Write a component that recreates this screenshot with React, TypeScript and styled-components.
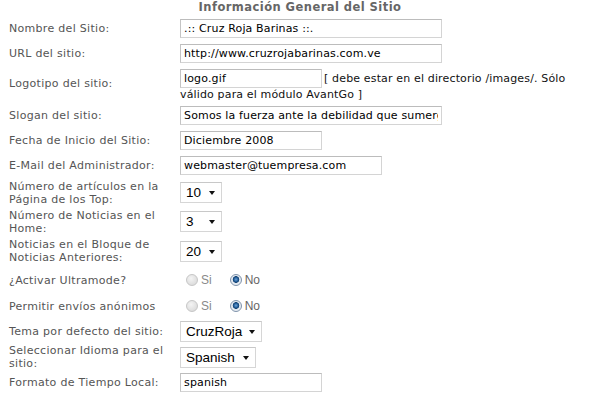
import React from 'react';
import styled, { createGlobalStyle } from 'styled-components';

const GlobalStyle = createGlobalStyle`
  html, body {
    margin: 0;
    padding: 0;
    background: #ffffff;
  }
  body {
    font-family: Verdana, "DejaVu Sans", sans-serif;
    font-size: 11px;
  }
`;

const Page = styled.div`
  width: 600px;
  height: 395px;
  overflow: hidden;
  padding: 0 9px;
  box-sizing: border-box;
`;

const Title = styled.div`
  height: 16px;
  line-height: 14px;
  text-align: center;
  font-weight: bold;
  color: #666666;
  font-size: 11.5px;
  letter-spacing: 0.45px;
`;

const Row = styled.div<{ $h: number }>`
  display: grid;
  grid-template-columns: 171px 1fr;
  align-items: center;
  height: ${(p) => p.$h}px;
`;

const Label = styled.div`
  color: #555555;
  line-height: 13px;
  letter-spacing: 0.3px;
`;

const Field = styled.div`
  display: flex;
  align-items: center;
`;

const TextInput = styled.input<{ $w: number }>`
  width: ${(p) => p.$w}px;
  height: 19px;
  box-sizing: border-box;
  margin: 0;
  padding: 0 3px;
  border: 1px solid #d4d4d4;
  border-top-color: #bcbcbc;
  border-left-color: #c4c4c4;
  background: #ffffff;
  font-family: Verdana, "DejaVu Sans", sans-serif;
  font-size: 11px;
  letter-spacing: 0.15px;
  color: #000000;
  outline: none;
`;

const LogoField = styled.div`
  line-height: 13px;
  color: #111111;
  padding-top: 3px;
`;

const Hint = styled.span<{ $first?: boolean }>`
  font-size: 11px;
  letter-spacing: 0.15px;
  margin-left: ${(p) => (p.$first ? '2px' : '0')};
`;

const SelectWrap = styled.span<{ $w: number }>`
  position: relative;
  display: inline-block;
  width: ${(p) => p.$w}px;
  height: 21px;

  &::after {
    content: '';
    position: absolute;
    right: 7px;
    top: 9px;
    border-left: 3.5px solid transparent;
    border-right: 3.5px solid transparent;
    border-top: 4px solid #111111;
    pointer-events: none;
  }
`;

const Select = styled.select`
  appearance: none;
  -webkit-appearance: none;
  width: 100%;
  height: 100%;
  box-sizing: border-box;
  margin: 0;
  padding: 0 0 0 5px;
  border: 1px solid #d6d6d6;
  border-top-color: #c8c8c8;
  background: #ffffff;
  font-family: Arial, "Liberation Sans", sans-serif;
  font-size: 13.5px;
  color: #000000;
  outline: none;
`;

const RadioGroup = styled.div`
  display: flex;
  align-items: center;
  padding-left: 6px;
  font-family: Arial, "Liberation Sans", sans-serif;
  font-size: 12px;
`;

const RadioOption = styled.span<{ $checked?: boolean }>`
  display: inline-flex;
  align-items: center;
  gap: 3px;
  margin-right: 18px;
  color: ${(p) => (p.$checked ? '#666666' : '#8a8a8a')};
`;

const RadioDot = styled.span<{ $checked?: boolean }>`
  width: 12px;
  height: 12px;
  box-sizing: border-box;
  border-radius: 50%;
  border: 1px solid ${(p) => (p.$checked ? '#7f93ab' : '#c6c6c6')};
  background: ${(p) =>
    p.$checked
      ? 'radial-gradient(circle at 50% 45%, #6fa3d6 0, #1f5a96 2.2px, #0e3d6e 3px, #dfe6ee 3.6px, #f6f8fa 100%)'
      : 'radial-gradient(circle at 40% 35%, #f4f4f4 0, #dedede 70%, #d2d2d2 100%)'};
`;

type Opt = { value: string };

const Dropdown: React.FC<{ w: number; value: string; options: Opt[] }> = ({ w, value, options }) => (
  <SelectWrap $w={w}>
    <Select defaultValue={value}>
      {options.map((o) => (
        <option key={o.value} value={o.value}>
          {o.value}
        </option>
      ))}
    </Select>
  </SelectWrap>
);

const YesNo: React.FC = () => (
  <RadioGroup>
    <RadioOption>
      <RadioDot />
      Si
    </RadioOption>
    <RadioOption $checked>
      <RadioDot $checked />
      No
    </RadioOption>
  </RadioGroup>
);

const nums = (list: string[]) => list.map((v) => ({ value: v }));

export default function App() {
  return (
    <>
      <GlobalStyle />
      <Page>
        <Title>Información General del Sitio</Title>

        <Row $h={25}>
          <Label>Nombre del Sitio:</Label>
          <Field>
            <TextInput $w={262} defaultValue=".:: Cruz Roja Barinas ::." />
          </Field>
        </Row>

        <Row $h={24}>
          <Label>URL del sitio:</Label>
          <Field>
            <TextInput $w={262} defaultValue="http://www.cruzrojabarinas.com.ve" />
          </Field>
        </Row>

        <Row $h={37}>
          <Label>Logotipo del sitio:</Label>
          <LogoField>
            <TextInput $w={142} defaultValue="logo.gif" />
            <Hint $first>[ debe estar en el directorio /images/. Sólo</Hint>
            <br />
            <Hint>válido para el módulo AvantGo ]</Hint>
          </LogoField>
        </Row>

        <Row $h={26}>
          <Label>Slogan del sitio:</Label>
          <Field>
            <TextInput $w={262} defaultValue="Somos la fuerza ante la debilidad que sumerge al ser humano" />
          </Field>
        </Row>

        <Row $h={25}>
          <Label>Fecha de Inicio del Sitio:</Label>
          <Field>
            <TextInput $w={142} defaultValue="Diciembre 2008" />
          </Field>
        </Row>

        <Row $h={25}>
          <Label>E-Mail del Administrador:</Label>
          <Field>
            <TextInput $w={202} defaultValue="webmaster@tuempresa.com" />
          </Field>
        </Row>

        <Row $h={29}>
          <Label>
            Número de artículos en la
            <br />
            Página de los Top:
          </Label>
          <Field>
            <Dropdown w={42} value="10" options={nums(['10', '15', '20', '25', '30'])} />
          </Field>
        </Row>

        <Row $h={29}>
          <Label>
            Número de Noticias en el
            <br />
            Home:
          </Label>
          <Field>
            <Dropdown w={42} value="3" options={nums(['1', '2', '3', '4', '5'])} />
          </Field>
        </Row>

        <Row $h={30}>
          <Label>
            Noticias en el Bloque de
            <br />
            Noticias Anteriores:
          </Label>
          <Field>
            <Dropdown w={42} value="20" options={nums(['10', '20', '30', '40'])} />
          </Field>
        </Row>

        <Row $h={28}>
          <Label>¿Activar Ultramode?</Label>
          <YesNo />
        </Row>

        <Row $h={24}>
          <Label>Permitir envíos anónimos</Label>
          <YesNo />
        </Row>

        <Row $h={26}>
          <Label>Tema por defecto del sitio:</Label>
          <Field>
            <Dropdown w={82} value="CruzRoja" options={nums(['CruzRoja', 'Default'])} />
          </Field>
        </Row>

        <Row $h={26}>
          <Label>
            Seleccionar Idioma para el
            <br />
            sitio:
          </Label>
          <Field>
            <Dropdown w={76} value="Spanish" options={nums(['Spanish', 'English'])} />
          </Field>
        </Row>

        <Row $h={25}>
          <Label>Formato de Tiempo Local:</Label>
          <Field>
            <TextInput $w={142} defaultValue="spanish" />
          </Field>
        </Row>
      </Page>
    </>
  );
}
